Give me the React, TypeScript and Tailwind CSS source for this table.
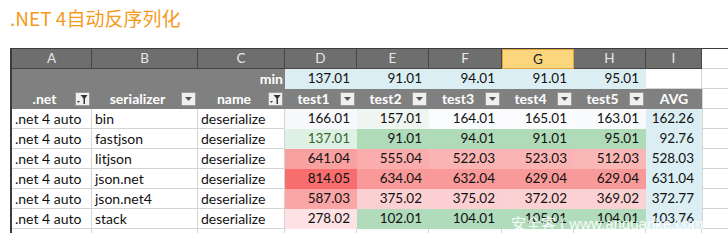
import React from 'react';

interface DataRow {
  serializer: string;
  values: string[];
  fills: string[];
  avg: string;
}

const rows: DataRow[] = [
  {
    serializer: 'bin',
    values: ['166.01', '157.01', '164.01', '165.01', '163.01'],
    fills: ['#f8f9fc', '#eff6f1', '#fafbfd', '#fbfbfd', '#f9fafc'],
    avg: '162.26',
  },
  {
    serializer: 'fastjson',
    values: ['137.01', '91.01', '94.01', '91.01', '95.01'],
    fills: ['#dff0e4', '#afdbb9', '#afdbb9', '#afdbb9', '#afdbb9'],
    avg: '92.76',
  },
  {
    serializer: 'litjson',
    values: ['641.04', '555.04', '522.03', '523.03', '512.03'],
    fills: ['#f9a1a1', '#fbadad', '#fbb4b4', '#fbb4b4', '#fbb6b6'],
    avg: '528.03',
  },
  {
    serializer: 'json.net',
    values: ['814.05', '634.04', '632.04', '629.04', '629.04'],
    fills: ['#f86d6d', '#f99999', '#f99999', '#f99a9a', '#f99a9a'],
    avg: '631.04',
  },
  {
    serializer: 'json.net4',
    values: ['587.03', '375.02', '375.02', '372.02', '369.02'],
    fills: ['#faa6a6', '#fcd0d3', '#fcd0d3', '#fcd1d3', '#fcd1d4'],
    avg: '372.77',
  },
  {
    serializer: 'stack',
    values: ['278.02', '102.01', '104.01', '105.01', '104.01'],
    fills: ['#fde1e4', '#b1dcbb', '#b1dcbb', '#b1dcbb', '#b1dcbb'],
    avg: '103.76',
  },
];

const widths = ['w-[80px]', 'w-[106px]', 'w-[87px]'];
const numW = ['w-[72px]', 'w-[72px]', 'w-[73px]', 'w-[72px]', 'w-[72px]'];
const letters = ['D', 'E', 'F', 'G', 'H'];
const mins = ['137.01', '91.01', '94.01', '91.01', '95.01'];

const ArrowBtn = () => (
  <span className="absolute right-[2px] top-[3px] flex h-[14px] w-[15px] items-center justify-center border border-[#9a9a9a] bg-[#f0f0f0]">
    <svg width="7" height="4" viewBox="0 0 7 4">
      <path d="M0 0h7L3.5 4z" fill="#555" />
    </svg>
  </span>
);

const FilterBtn = () => (
  <span className="absolute right-[2px] top-[3px] flex h-[14px] w-[15px] items-center justify-center border border-[#9a9a9a] bg-[#f0f0f0]">
    <svg width="11" height="9" viewBox="0 0 11 9">
      <path d="M0 6h3L1.5 8z" fill="#444" />
      <path d="M3.5 0h7L8 3.5V9H6.5V3.5z" fill="#333" />
    </svg>
  </span>
);

const HeadCell = ({ w, label, filter }: { w: string; label: string; filter?: boolean }) => (
  <div className={`relative ${w} h-full bg-[#808080] pr-[17px] text-center text-[14px] font-bold text-white`}>
    <span className="pl-[2px]">{label}</span>
    {filter ? <FilterBtn /> : <ArrowBtn />}
  </div>
);

export default function App() {
  return (
    <div
      className="relative h-[243px] w-[728px] overflow-hidden bg-white"
      style={{ fontFamily: 'Lato, "Liberation Sans", sans-serif' }}
    >
      {/* title */}
      <div
        className="h-[48px] pl-[10px] pt-[6px] text-[19px] leading-[24px] text-[#f59a1d]"
        style={{ fontFamily: '"Noto Sans CJK SC", "Noto Sans", sans-serif' }}
      >
        .NET 4自动反序列化
      </div>

      <div className="ml-[10px] flex h-[185px] flex-col border-l-2 border-[#3c3c3c] text-[13.5px] leading-[19px]">
        {/* column letters */}
        <div className="flex h-[21px] border-t border-[#3c3c3c]">
          {['A', 'B', 'C'].map((l, i) => (
            <div key={l} className={`${widths[i]} border-r border-b border-[#454545] bg-[#6e6e6e] text-center text-[#e6e6e6]`}>
              {l}
            </div>
          ))}
          {letters.map((l, i) =>
            l === 'G' ? (
              <div key={l} className={`${numW[i]} border border-[#e2a43c] bg-[#fbd67c] text-center text-[#222]`}>
                {l}
              </div>
            ) : (
              <div key={l} className={`${numW[i]} border-r border-b border-[#454545] bg-[#6e6e6e] text-center text-[#e6e6e6]`}>
                {l}
              </div>
            )
          )}
          <div className="w-[56px] border-r border-b border-[#454545] bg-[#6e6e6e] text-center text-[#e6e6e6]">I</div>
          <div className="flex-1 border-b border-[#d4d4d4]" />
        </div>

        {/* min row */}
        <div className="flex h-[20px]">
          <div className="w-[80px] bg-[#808080]" />
          <div className="w-[106px] bg-[#808080]" />
          <div className="w-[87px] bg-[#808080] pr-[2px] text-right text-[14px] font-bold text-white">min</div>
          {mins.map((m, i) => (
            <div key={i} className={`${numW[i]} bg-[#daeef3] pr-[7px] text-right text-[#111]`}>
              {m}
            </div>
          ))}
          <div className="w-[56px] border-r border-b border-[#d4d4d4]" />
          <div className="flex-1 border-b border-[#d4d4d4]" />
        </div>

        {/* header row */}
        <div className="flex h-[20px]">
          <HeadCell w="w-[80px]" label=".net" filter />
          <HeadCell w="w-[106px]" label="serializer" />
          <HeadCell w="w-[87px]" label="name" filter />
          {letters.map((_, i) => (
            <HeadCell key={i} w={numW[i]} label={`test${i + 1}`} />
          ))}
          <div className="w-[56px] bg-[#808080] text-center text-[14px] font-bold text-white">AVG</div>
          <div className="flex-1 border-b border-l border-[#d4d4d4]" />
        </div>

        {/* data rows */}
        {rows.map((r, ri) => (
          <div key={ri} className="flex h-[20px] text-[#111]">
            <div className="w-[80px] border-r border-b border-[#d4d4d4] pl-[3px] text-[14px]">.net 4 auto</div>
            <div className="w-[106px] border-r border-b border-[#d4d4d4] pl-[3px] text-[14px]">{r.serializer}</div>
            <div className="w-[87px] border-r border-b border-[#d4d4d4] pl-[3px] text-[14px]">deserialize</div>
            {r.values.map((v, i) => (
              <div
                key={i}
                className={`${numW[i]} pr-[7px] text-right ${ri === 1 && i === 0 ? 'text-[#2f6b27]' : ''}`}
                style={{ backgroundColor: r.fills[i] }}
              >
                {v}
              </div>
            ))}
            <div className="w-[56px] bg-[#daeef3] pr-[8px] text-right">{r.avg}</div>
            <div className="flex-1 border-b border-l border-[#d4d4d4]" />
          </div>
        ))}

        {/* partial next row */}
        <div className="flex h-[4px]">
          <div className="w-[80px] border-r border-[#d4d4d4]" />
          <div className="w-[106px] border-r border-[#d4d4d4]" />
          <div className="w-[87px] border-r border-[#d4d4d4]" />
          {numW.map((w, i) => (
            <div key={i} className={`${w} border-r border-[#d4d4d4]`} />
          ))}
          <div className="w-[56px] border-r border-[#d4d4d4]" />
        </div>
      </div>

      {/* watermark */}
      <div
        className="absolute left-[511px] top-[214px] whitespace-nowrap text-[15px] leading-[20px] text-white/90"
        style={{ fontFamily: '"Liberation Sans", "Noto Sans CJK SC", sans-serif' }}
      >
        安全客 ( www.anquanke.com
      </div>
    </div>
  );
}
